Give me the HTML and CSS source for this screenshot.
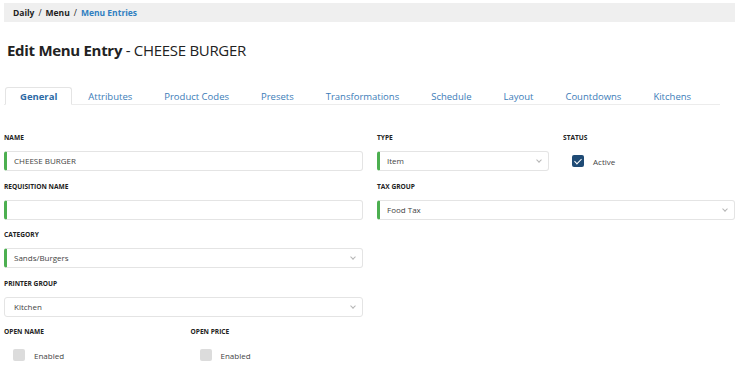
FILE: index.html
```html
<!DOCTYPE html>
<html lang="en">

<head>
    <meta charset="UTF-8">
    <meta name="viewport" content="width=device-width, initial-scale=1.0">
    <title>Edit Menu Entry</title>
    <link rel="stylesheet" href="styles.css">
</head>

<body>
    <div class="page">
        <!-- breadcrumb -->
        <ol class="crumbs">
            <li>Daily</li>
            <li class="sep">/</li>
            <li>Menu</li>
            <li class="sep">/</li>
            <li class="current">Menu Entries</li>
        </ol>

        <h1 class="title"><b>Edit Menu Entry</b> - CHEESE BURGER</h1>

        <!-- tabs -->
        <ul class="tabs">
            <li class="active">General</li>
            <li>Attributes</li>
            <li>Product Codes</li>
            <li>Presets</li>
            <li>Transformations</li>
            <li>Schedule</li>
            <li>Layout</li>
            <li>Countdowns</li>
            <li>Kitchens</li>
        </ul>

        <div class="form">
            <div class="field">
                <label>Name</label>
                <div class="input req">CHEESE BURGER</div>
            </div>
            <div class="field">
                <label>Type</label>
                <div class="input req select">Item<i class="caret"></i></div>
            </div>
            <div class="field">
                <label>Status</label>
                <div class="check"><span class="box on"></span>Active</div>
            </div>

            <div class="field">
                <label>Requisition Name</label>
                <div class="input req"></div>
            </div>
            <div class="field wide">
                <label>Tax Group</label>
                <div class="input req select">Food Tax<i class="caret"></i></div>
            </div>

            <div class="field">
                <label>Category</label>
                <div class="input req select">Sands/Burgers<i class="caret"></i></div>
            </div>
            <div class="field full">
                <label>Printer Group</label>
                <div class="input select">Kitchen<i class="caret"></i></div>
            </div>

            <div class="field full pair">
                <div>
                    <label>Open Name</label>
                    <div class="check"><span class="box"></span>Enabled</div>
                </div>
                <div>
                    <label>Open Price</label>
                    <div class="check"><span class="box"></span>Enabled</div>
                </div>
            </div>
        </div>
    </div>
</body>

</html>
```

FILE: styles.css
```css
* {
    padding: 0;
    margin: 0;
    list-style: none;
    box-sizing: border-box;
}

body {
    font-family: "Open Sans", "Noto Sans", sans-serif;
    color: #333;
    background: #fff;
}

.page {
    padding: 3px 15px 0 4px;
}

/* breadcrumb */
.crumbs {
    display: flex;
    align-items: center;
    height: 19px;
    padding-left: 9px;
    background-color: #efefef;
    font-size: 8.5px;
    font-weight: 700;
    color: #222;
}

.crumbs .sep {
    margin: 0 4px;
    font-weight: 400;
}

.crumbs .current {
    color: #2f7fc1;
}

.title {
    margin: 19px 0 0 3px;
    height: 19px;
    line-height: 19px;
    font-size: 15px;
    letter-spacing: -0.3px;
    font-weight: 400;
    color: #222;
}

.title b {
    font-weight: 700;
}

/* tabs */
.tabs {
    display: flex;
    margin-top: 27px;
    margin-right: 15px;
    border-bottom: 1px solid #ececec;
    font-size: 9.5px;
    color: #3b7cb8;
}

.tabs li {
    height: 18px;
    line-height: 18px;
    padding: 0 15px;
    margin-bottom: -1px;
    border: 1px solid transparent;
    border-radius: 3px 3px 0 0;
}

.tabs li.active {
    margin-left: 1px;
    padding: 0 14px;
    border-color: #e4e4e4;
    border-bottom-color: #fff;
    background: #fff;
    font-weight: 700;
    color: #2c6aa5;
}

/* form */
.form {
    display: grid;
    grid-template-columns: 359px 172px 172px;
    column-gap: 14px;
    row-gap: 8.5px;
    padding-top: 26px;
}

.field label {
    display: block;
    height: 13px;
    line-height: 13px;
    margin-bottom: 7px;
    font-size: 6.6px;
    font-weight: 700;
    text-transform: uppercase;
    color: #222;
}

.field.wide {
    grid-column: span 2;
}

.field.full {
    grid-column: 1 / 2;
}

.input {
    position: relative;
    height: 20px;
    line-height: 18px;
    padding-left: 9px;
    border: 1px solid #e4e4e4;
    border-radius: 3px;
    font-size: 8px;
    color: #444;
}

.input.req {
    border-left: 3px solid #4caf50;
    padding-left: 7px;
}

.caret {
    position: absolute;
    top: 6px;
    right: 7px;
    width: 4px;
    height: 4px;
    border-right: 1px solid #b5b5b5;
    border-bottom: 1px solid #b5b5b5;
    transform: rotate(45deg);
}

.check {
    display: flex;
    align-items: center;
    height: 20px;
    padding-left: 9px;
    font-size: 8px;
    color: #444;
}

.check .box {
    width: 12px;
    height: 12px;
    margin-right: 9px;
    border-radius: 2px;
    background-color: #dcdcdc;
}

.check .box.on {
    position: relative;
    background-color: #1f4b75;
}

.check .box.on::after {
    content: "";
    position: absolute;
    left: 4px;
    top: 1.5px;
    width: 3px;
    height: 6px;
    border-right: 1.5px solid #fff;
    border-bottom: 1.5px solid #fff;
    transform: rotate(45deg);
}

.pair {
    display: grid;
    grid-template-columns: 1fr 1fr;
    column-gap: 14px;
}
```
